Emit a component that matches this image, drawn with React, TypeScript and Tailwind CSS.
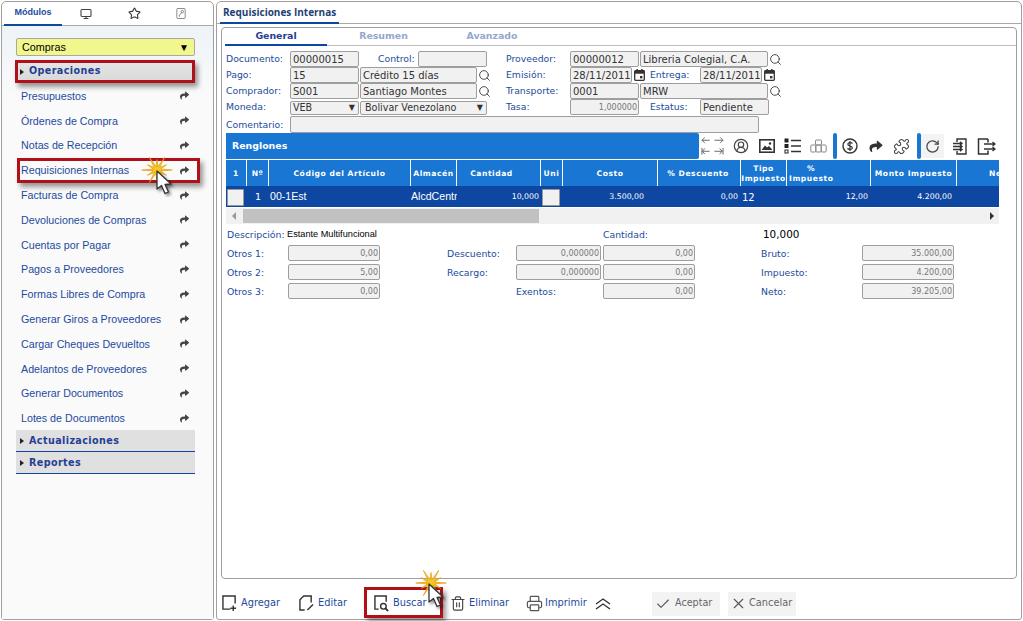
import React from "react";
import { Search, CircleUserRound, RotateCw, Puzzle, Check, X, Printer, Trash2, Star, Monitor } from "lucide-react";
import { FaShare } from "react-icons/fa";

const ui = { fontFamily: '"DejaVu Sans", sans-serif' };
const arial = { fontFamily: '"Liberation Sans", Arial, sans-serif' };

function Burst({ className }: { className: string }) {
  const pts: string[] = [];
  for (let i = 0; i < 24; i++) {
    const a = (i * Math.PI) / 12;
    const r = i % 2 === 0 ? (i % 4 === 0 ? 18 : 13) : 4.5;
    pts.push(`${20 + r * Math.cos(a)},${20 + r * Math.sin(a) * 0.95}`);
  }
  return (
    <svg viewBox="0 0 40 40" className={className}>
      <polygon points={pts.join(" ")} fill="#f7c823" stroke="#e09a12" strokeWidth="0.8" />
    </svg>
  );
}

function Cursor({ className }: { className: string }) {
  return (
    <svg viewBox="0 0 20 26" className={className} style={{ filter: "drop-shadow(2px 2px 1.5px rgba(0,0,0,.45))" }}>
      <path d="M2 1 L2 19 L6.5 15.5 L10 23.5 L13.5 22 L10 14.5 L16 14 Z" fill="#fff" stroke="#333" strokeWidth="1.3" strokeLinejoin="round" />
    </svg>
  );
}

function RedBox({ className }: { className: string }) {
  return <div className={`absolute border-[3px] border-[#b0101a] shadow-[3px_4px_5px_rgba(0,0,0,.4)] ${className}`} />;
}

function Field({ w, children, right, ml }: { w: string; children?: React.ReactNode; right?: boolean; ml?: string }) {
  return (
    <div className={`${w} ${ml ?? ""} h-full shrink-0 flex items-center overflow-hidden rounded-[2px] border border-[#9e9e9e] bg-[#f1f1f1] whitespace-nowrap ${right ? "justify-end pr-[1px] pt-[1px] text-[8px] text-[#777]" : "pl-[2px] pt-[1px] text-[10px] text-[#333]"}`}>
      {children}
    </div>
  );
}

function Lbl({ w, children, cls }: { w: string; children: React.ReactNode; cls?: string }) {
  return <div className={`${w} ${cls ?? ""} shrink-0 text-[9.3px] text-[#1d4a9e] whitespace-nowrap`}>{children}</div>;
}

function Drop({ w, ml, pl, children }: { w: string; ml?: string; pl: string; children: React.ReactNode }) {
  return (
    <div className={`${w} ${ml ?? ""} ${pl} h-[14px] self-end shrink-0 flex items-center justify-between rounded-[2px] border border-[#9e9e9e] bg-[#f1f1f1] pr-[3px] text-[9.6px] text-[#333]`}>
      <span>{children}</span>
      <span className="text-[8px] text-[#333]">▼</span>
    </div>
  );
}

const Lens = ({ ml }: { ml?: string }) => <Search className={`w-[13px] h-[13px] shrink-0 ${ml ?? "ml-[1px]"} text-[#333]`} strokeWidth={1.6} />;

const Cal = ({ ml }: { ml: string }) => (
  <svg viewBox="0 0 11 12" className={`w-[11px] h-[12px] shrink-0 ${ml}`}>
    <rect x="0.7" y="1.7" width="9.6" height="9.6" rx="0.8" fill="none" stroke="#333" strokeWidth="1.3" />
    <rect x="0.7" y="1.7" width="9.6" height="3" fill="#333" />
    <rect x="2.5" y="0" width="1.4" height="2" fill="#333" />
    <rect x="7.1" y="0" width="1.4" height="2" fill="#333" />
    <rect x="6" y="7" width="2.4" height="2.4" fill="#333" />
  </svg>
);

const menu = [
  "Presupuestos", "Órdenes de Compra", "Notas de Recepción", "Requisiciones Internas", "Facturas de Compra",
  "Devoluciones de Compras", "Cuentas por Pagar", "Pagos a Proveedores", "Formas Libres de Compra",
  "Generar Giros a Proveedores", "Cargar Cheques Devueltos", "Adelantos de Proveedores", "Generar Documentos", "Lotes de Documentos",
];

const cols: [string, React.ReactNode][] = [
  ["w-[21px]", "1"], ["w-[22px]", "Nº"], ["w-[142px]", "Código del Artículo"], ["w-[46px]", "Almacén"],
  ["w-[84px] pr-[14px]", "Cantidad"],
  ["w-[22px]", "Uni"], ["w-[95px]", "Costo"], ["w-[83px] pr-[2px]", "% Descuento"],
  ["w-[46px]", <>Tipo<br />Impuesto</>],
  ["w-[84px] justify-start!", <span key="p" className="block w-[48px] text-center">%<br /><span className="block text-left pl-[2px]">Impuesto</span></span>],
  ["w-[86px]", "Monto Impuesto"],
  ["w-[84px] justify-start! pl-[32px]", "Neto"],
];

function Caret() {
  return <span className="inline-block w-0 h-0 border-y-[3.5px] border-y-transparent border-l-[4px] border-l-[#222] mr-[5px]" />;
}

function Section({ label, top }: { label: string; top?: boolean }) {
  return (
    <div className={`h-[22px] pl-[4px] flex items-center bg-[#e0e0e0] border-b border-[#0d47a1] text-[9.6px] font-bold text-[#1f3f94] tracking-[0.4px] ${top ? "bg-gradient-to-b from-[#e6e6e6] to-[#d8d8d8]" : ""}`} style={ui}>
      <Caret />{label}
    </div>
  );
}

function FootBtn({ icon, label, w }: { icon: React.ReactNode; label: string; w: string }) {
  return (
    <div className={`${w} shrink-0 flex items-center h-full`}>
      <span className="w-[19px] shrink-0 flex items-center">{icon}</span>
      <span className="text-[9.8px] text-[#1d4a9e]">{label}</span>
    </div>
  );
}

const TI = ({ children, w = "w-[25px]" }: { children: React.ReactNode; w?: string }) => (
  <div className={`${w} h-full shrink-0 flex items-center justify-center text-[#444]`}>{children}</div>
);

const SBar = () => <div className="w-[4px] h-[26px] rounded-[2px] bg-[#1976d2] shrink-0" />;

const sumRows = [
  ["Otros 1:", "0,00", "Descuento:", "0,000000", "0,00", "Bruto:", "35.000,00"],
  ["Otros 2:", "5,00", "Recargo:", "0,000000", "0,00", "Impuesto:", "4.200,00"],
  ["Otros 3:", "0,00", "", "", "0,00", "Neto:", "39.205,00"],
];

export default function App() {
  return (
    <div className="relative w-[1023px] h-[621px] overflow-hidden bg-white flex pl-[1px] pt-[1px] pb-[1px] pr-[1px] gap-[2px]" style={ui}>
      {/* left panel */}
      <aside className="w-[213px] h-full shrink-0 flex flex-col rounded-t-[5px] rounded-b-[3px] border border-[#a0a0a0] bg-[#fafafa]">
        <div className="h-[24px] shrink-0 flex border-b border-[#a9a9a9] bg-white rounded-t-[5px]">
          <div className="w-[58px] ml-[2px] h-[24px] border-b-[2px] border-[#0d47a1] font-bold text-[#1d4a9e] flex items-center justify-center" style={{ ...arial, fontSize: "9px" }}>Módulos</div>
          <div className="w-[48px] flex items-center justify-center"><Monitor className="w-[12px] h-[12px] text-[#444]" strokeWidth={2.2} /></div>
          <div className="w-[48px] flex items-center justify-center"><Star className="w-[13px] h-[13px] text-[#333]" strokeWidth={2} /></div>
          <div className="w-[46px] flex items-center justify-center">
            <svg viewBox="0 0 12 14" className="w-[10px] h-[13px]" fill="none" stroke="#666" strokeWidth="0.9">
              <rect x="1" y="1" width="10" height="12" rx="1" />
              <circle cx="7.5" cy="4.8" r="1.5" />
              <path d="M6.5 6 L3.5 10 L4.5 10.8" />
            </svg>
          </div>
        </div>
        <div className="flex-1 pl-[14px] pr-[18px] pt-[12px] bg-gradient-to-b from-[#eef3f7] via-[#fafafa] via-[12%] to-[#fafafa]">
          <div className="h-[18px] flex items-center justify-between rounded-[2px] border border-[#a8a8a8] bg-[#f1f78c] pl-[5px] pr-[5px] text-[10.8px] text-black" style={arial}>
            <span>Compras</span><span className="text-[10px]">▼</span>
          </div>
          <div className="mt-[5px]"><Section label="Operaciones" top /></div>
          <div className="pt-[0.5px]">
            {menu.map((m) => (
              <div key={m} className="h-[24.8px] flex items-center justify-between pl-[5px] pr-[5px] text-[10.7px] text-[#1d4a9e]" style={arial}>
                <span>{m}</span>
                <FaShare className="w-[11px] h-[9px] text-[#444]" />
              </div>
            ))}
          </div>
          <div className="-mt-[0.3px]"><Section label="Actualizaciones" /></div>
          <Section label="Reportes" />
        </div>
      </aside>

      {/* right panel */}
      <main className="flex-1 h-full flex flex-col rounded-t-[5px] rounded-b-[3px] border border-[#a0a0a0] bg-white">
        <div className="h-[22px] shrink-0 border-b border-[#a9a9a9] flex px-[3px]">
          <div className="w-[119px] h-[22px] border-b-[2px] border-[#0d47a1] flex items-center pl-[3px] text-[10px] font-bold text-[#1f3f76]" style={{ fontFamily: '"Open Sans", sans-serif' }}>Requisiciones Internas</div>
        </div>
        <div className="mt-[3px] mx-[4px] h-[552px] shrink-0 rounded-[4px] border border-[#a0a0a0] flex flex-col pl-[4px]">
          <div className="h-[18px] shrink-0 -ml-[1px] flex border-b border-[#bdbdbd]">
            <div className="w-[102px] h-[18px] border-b-[2px] border-[#0d47a1] flex items-center justify-center text-[9.4px] font-bold text-[#1f3f94]">General</div>
            <div className="w-[113px] flex items-center justify-center text-[9.4px] font-bold text-[#93a8cf]">Resumen</div>
            <div className="w-[66px] ml-[19px] flex items-center justify-center text-[9.4px] font-bold text-[#93a8cf]">Avanzado</div>
          </div>

          {/* form */}
          <div className="pt-[5px] flex flex-col">
            <div className="h-[16px] flex items-center">
              <Lbl w="w-[64px]">Documento:</Lbl>
              <Field w="w-[69px]">00000015</Field>
              <Lbl w="w-[40px]" cls="ml-[19px]">Control:</Lbl>
              <Field w="w-[69px]" />
              <Lbl w="w-[64px]" cls="ml-[19px]">Proveedor:</Lbl>
              <Field w="w-[69px]">00000012</Field>
              <Field w="w-[128px]" ml="ml-[1px]">Libreria Colegial, C.A.</Field>
              <Lens />
            </div>
            <div className="h-[16px] flex items-center">
              <Lbl w="w-[64px]">Pago:</Lbl>
              <Field w="w-[69px]">15</Field>
              <Field w="w-[117px]" ml="ml-[1px]">Crédito 15 días</Field>
              <Lens />
              <Lbl w="w-[64px]" cls="ml-[15px]">Emisión:</Lbl>
              <Field w="w-[62px]">28/11/2011</Field>
              <Cal ml="ml-[2px]" />
              <Lbl w="w-[50px]" cls="ml-[5px]">Entrega:</Lbl>
              <Field w="w-[62px]">28/11/2011</Field>
              <Cal ml="ml-[2px]" />
            </div>
            <div className="h-[16px] flex items-center">
              <Lbl w="w-[64px]">Comprador:</Lbl>
              <Field w="w-[69px]">S001</Field>
              <Field w="w-[117px]" ml="ml-[1px]">Santiago Montes</Field>
              <Lens />
              <Lbl w="w-[64px]" cls="ml-[15px]">Transporte:</Lbl>
              <Field w="w-[69px]">0001</Field>
              <Field w="w-[128px]" ml="ml-[1px]">MRW</Field>
              <Lens />
            </div>
            <div className="h-[16px] flex items-center">
              <Lbl w="w-[64px]">Moneda:</Lbl>
              <Drop w="w-[69px]" pl="pl-[2px]">VEB</Drop>
              <Drop w="w-[127px]" ml="ml-[1px]" pl="pl-[4px]">Bolivar Venezolano</Drop>
              <Lbl w="w-[64px]" cls="ml-[19px]">Tasa:</Lbl>
              <Field w="w-[69px]" right>1,000000</Field>
              <Lbl w="w-[50px]" cls="ml-[11px]">Estatus:</Lbl>
              <Field w="w-[69px]">Pendiente</Field>
            </div>
            <div className="h-[17px] mt-[1px] flex items-center">
              <Lbl w="w-[64px]">Comentario:</Lbl>
              <Field w="w-[469px]" />
            </div>
          </div>

          {/* toolbar */}
          <div className="h-[26px] w-[773px] flex overflow-hidden shrink-0">
            <div className="w-[473px] h-full shrink-0 bg-[#1976d2] rounded-r-[2px] flex items-center pl-[6px] text-[9.4px] font-bold text-white">Renglones</div>
            <TI w="w-[26px]">
              <svg viewBox="0 0 24 22" className="w-[23px] h-[22px]" fill="none" stroke="#666" strokeWidth="1">
                <path d="M1 5 H9 M4 2 L1 5 L4 8 M14 5 H23 M20 2 L23 5 L20 8" />
                <path d="M1 13 V20 M1 16.5 H9 M4 13.5 L1.5 16.5 L4 19.5 M23 13 V20 M14 16.5 H22.5 M19.5 13.5 L22 16.5 L19.5 19.5" />
              </svg>
            </TI>
            <div className="w-[4px]" />
            <TI w="w-[24px]"><CircleUserRound className="w-[16px] h-[16px]" strokeWidth={1.8} /></TI>
            <TI w="w-[27px]">
              <svg viewBox="0 0 16 14" className="w-[16px] h-[14px]">
                <rect x="0.8" y="0.8" width="14.4" height="12.4" fill="none" stroke="#333" strokeWidth="1.6" />
                <path d="M2.5 11 L6 6.5 L8 8.5 L10 7 L13.5 11 Z" fill="#333" />
                <circle cx="11" cy="4.5" r="1.2" fill="#333" />
              </svg>
            </TI>
            <TI w="w-[25px]">
              <svg viewBox="0 0 17 16" className="w-[17px] h-[16px]">
                <rect x="0.5" y="0.5" width="4" height="4" fill="#222" />
                <rect x="0.5" y="6" width="4" height="4" fill="#222" />
                <rect x="1" y="12" width="3" height="3" fill="none" stroke="#222" />
                <path d="M7 2.5 H17 M7 8 H17 M7 13.5 H17" stroke="#333" strokeWidth="1.4" />
              </svg>
            </TI>
            <TI w="w-[26px]">
              <svg viewBox="0 0 17 14" className="w-[17px] h-[14px]" fill="none" stroke="#888" strokeWidth="1">
                <rect x="5.5" y="1" width="6" height="5" rx="1" />
                <rect x="0.8" y="6" width="5" height="7" rx="1" />
                <rect x="5.8" y="6" width="5.4" height="7" rx="1" />
                <rect x="11.2" y="6" width="5" height="7" rx="1" />
              </svg>
            </TI>
            <div className="w-[2px]" />
            <SBar />
            <TI w="w-[25px]">
              <svg viewBox="0 0 16 16" className="w-[16px] h-[16px]">
                <circle cx="8" cy="8" r="7" fill="none" stroke="#333" strokeWidth="1.4" />
                <path d="M10.5 5.6 C10 4.4 6 4 5.8 6 C5.7 8.2 10.4 7.6 10.3 10 C10.1 12 6 11.7 5.5 10.3 M8 3 V13" fill="none" stroke="#333" strokeWidth="1.2" />
              </svg>
            </TI>
            <TI w="w-[27px]"><FaShare className="w-[16px] h-[13px] text-[#333]" /></TI>
            <TI w="w-[24px]"><Puzzle className="w-[17px] h-[17px]" strokeWidth={1.5} /></TI>
            <div className="w-[4px]" />
            <SBar />
            <div className="w-[23px] h-[24px] self-center bg-[#f3f3f3] shrink-0 flex items-center justify-center text-[#444]"><RotateCw className="w-[15px] h-[15px]" strokeWidth={2} /></div>
            <TI w="w-[30px]">
              <svg viewBox="0 0 15 17" className="w-[15px] h-[17px]" fill="none" stroke="#333" strokeWidth="1.4">
                <path d="M5 4 V1 H14 V16 H5 V13 M1 5.5 H10 M8 3.8 L10 5.5 L8 7.2 M1 8.5 H10 M8 6.8 L10 8.5 L8 10.2 M1 11.5 H10 M8 9.8 L10 11.5 L8 13.2" />
              </svg>
            </TI>
            <TI w="w-[24px]">
              <svg viewBox="0 0 19 17" className="w-[19px] h-[17px]" fill="none" stroke="#333" strokeWidth="1.5">
                <path d="M11 1 H1.5 V16 H11 V12.5 M11 4.5 V1" />
                <path d="M7 6 H18 M15.5 4 L18 6 L15.5 8 M7 11 H18 M15.5 9 L18 11 L15.5 13" strokeWidth="1.3" />
              </svg>
            </TI>
          </div>

          {/* grid */}
          <div className="w-[773px] shrink-0 overflow-hidden">
            <div className="flex h-[27px] w-[860px] bg-[#1976d2] border-t border-white">
              {cols.map(([w, c], i) => (
                <div key={i} className={`${w} shrink-0 h-full border-r border-white flex items-center justify-center text-center pt-[1px] leading-[10px] text-[7.6px] font-bold text-white tracking-[0.55px] whitespace-nowrap`}>
                  <div>{c}</div>
                </div>
              ))}
            </div>
            <div className="flex h-[21px] items-center bg-[#0d47a1] text-white [&>div]:pt-[1px]">
              <div className="w-[21px] shrink-0 h-full flex items-center pl-[1px]"><div className="w-[17px] h-[17px] bg-[#f1f1f1] border border-[#999] rounded-[1px]" /></div>
              <div className="w-[22px] shrink-0 text-right pr-[8px] text-[9.5px]">1</div>
              <div className="w-[142px] shrink-0 pl-[1px] text-[10.6px]" style={arial}>00-1Est</div>
              <div className="w-[46px] shrink-0 overflow-hidden whitespace-nowrap text-[10.6px]" style={arial}>AlcdCentro</div>
              <div className="w-[84px] shrink-0 text-right pr-[2px] text-[7.8px]">10,000</div>
              <div className="w-[22px] shrink-0 h-full flex items-center pl-[1px]"><div className="w-[18px] h-[17px] bg-[#f1f1f1] border border-[#999] rounded-[1px]" /></div>
              <div className="w-[95px] shrink-0 text-right pr-[14px] text-[7.8px]">3.500,00</div>
              <div className="w-[83px] shrink-0 text-right pr-[3px] text-[7.8px]">0,00</div>
              <div className="w-[46px] shrink-0 pl-[1px] text-[10px]">12</div>
              <div className="w-[84px] shrink-0 text-right pr-[3px] text-[7.8px]">12,00</div>
              <div className="w-[86px] shrink-0 text-right pr-[5px] text-[7.8px]">4.200,00</div>
            </div>
            <div className="mt-[1px] h-[16px] bg-[#f1f1f1] flex items-center">
              <span className="w-0 h-0 ml-[6px] border-y-[4px] border-y-transparent border-r-[4px] border-r-[#999]" />
              <div className="ml-[7px] w-[296px] h-[14px] bg-[#c1c1c1]" />
              <div className="flex-1" />
              <span className="w-0 h-0 mr-[5px] border-y-[4px] border-y-transparent border-l-[4px] border-l-[#333]" />
            </div>
          </div>

          {/* summary */}
          <div className="pt-[4px] text-[9.6px]">
            <div className="h-[13px] flex items-center pt-[1px]">
              <Lbl w="w-[60px]" cls="ml-[1px]">Descripción:</Lbl>
              <div className="w-[316px] shrink-0 text-[9.2px] text-black" style={arial}>Estante Multifuncional</div>
              <Lbl w="w-[160px]">Cantidad:</Lbl>
              <div className="text-[10.4px] text-black">10,000</div>
            </div>
            <div className="mt-[4px] flex flex-col gap-[3px]">
              {sumRows.map((r) => (
                <div key={r[0]} className="h-[16px] flex items-center">
                  <Lbl w="w-[61px]" cls="ml-[1px] pt-[1px]">{r[0]}</Lbl>
                  <Field w="w-[92px]" right>{r[1]}</Field>
                  {r[3] ? (
                    <>
                      <Lbl w="w-[69px]" cls="ml-[67px] pt-[1px]">{r[2]}</Lbl>
                      <Field w="w-[85px]" right>{r[3]}</Field>
                    </>
                  ) : (
                    <Lbl w="w-[87px]" cls="ml-[136px] pt-[1px]">Exentos:</Lbl>
                  )}
                  <Field w="w-[92px]" ml={r[3] ? "ml-[2px]" : ""} right>{r[4]}</Field>
                  <Lbl w="w-[101px]" cls="ml-[66px] pt-[1px]">{r[5]}</Lbl>
                  <Field w="w-[92px]" right>{r[6]}</Field>
                </div>
              ))}
            </div>
          </div>
        </div>

        {/* footer */}
        <div className="flex-1 flex items-center pl-[5px] pt-[9px]">
          <div className="h-[25px] flex items-center">
            <FootBtn w="w-[77px]" label="Agregar" icon={
              <svg viewBox="0 0 16 18" className="w-[15px] h-[17px]" fill="none" stroke="#333" strokeWidth="1.5"><path d="M9 15 H1 V1 H14 V9" /><path d="M12 11 V17 M9 14 H15" /></svg>
            } />
            <FootBtn w="w-[75px]" label="Editar" icon={
              <svg viewBox="0 0 16 18" className="w-[15px] h-[17px]" fill="none" stroke="#333" strokeWidth="1.5"><path d="M6 16 H1 V5 L5 1 H13 V8" /><path d="M9 16 L15 10" /></svg>
            } />
            <FootBtn w="w-[76px]" label="Buscar" icon={
              <svg viewBox="0 0 16 18" className="w-[15px] h-[17px]" fill="none" stroke="#333" strokeWidth="1.5"><path d="M5 15 H1 V1 H13 V7" /><circle cx="10" cy="12" r="3" /><path d="M12.2 14.2 L15 17" strokeWidth="2" /></svg>
            } />
            <FootBtn w="w-[76px]" label="Eliminar" icon={<Trash2 className="w-[16px] h-[17px] text-[#444]" strokeWidth={1.7} />} />
            <FootBtn w="w-[69px]" label="Imprimir" icon={<Printer className="w-[17px] h-[17px] text-[#555]" strokeWidth={1.7} />} />
            <svg viewBox="0 0 16 12" className="w-[16px] h-[12px] shrink-0" fill="none" stroke="#333" strokeWidth="1.4"><path d="M1 6 L8 1 L15 6 M1 11 L8 6 L15 11" /></svg>
            <div className="ml-[41px] w-[68px] h-[24px] bg-[#f3f3f3] flex items-center pl-[3px] gap-[4px] text-[9.6px] text-[#666]"><Check className="w-[16px] h-[16px] text-[#555]" strokeWidth={1.6} />Aceptar</div>
            <div className="ml-[8px] w-[68px] h-[24px] bg-[#f3f3f3] flex items-center pl-[2px] gap-[2px] text-[9.8px] text-[#666]"><X className="w-[17px] h-[17px] text-[#555]" strokeWidth={1.5} />Cancelar</div>
          </div>
        </div>
      </main>

      {/* overlays: annotations */}
      <RedBox className="left-[15px] top-[60px] w-[180px] h-[23px]" />
      <RedBox className="left-[17px] top-[158px] w-[183px] h-[25px]" />
      <RedBox className="left-[364px] top-[587px] w-[79px] h-[31px]" />
      <Burst className="absolute left-[140px] top-[153px] w-[34px] h-[34px]" />
      <Cursor className="absolute left-[155px] top-[170px] w-[20px] h-[26px]" />
      <Burst className="absolute left-[414px] top-[566px] w-[34px] h-[34px]" />
      <Cursor className="absolute left-[427px] top-[583px] w-[20px] h-[26px]" />
    </div>
  );
}
